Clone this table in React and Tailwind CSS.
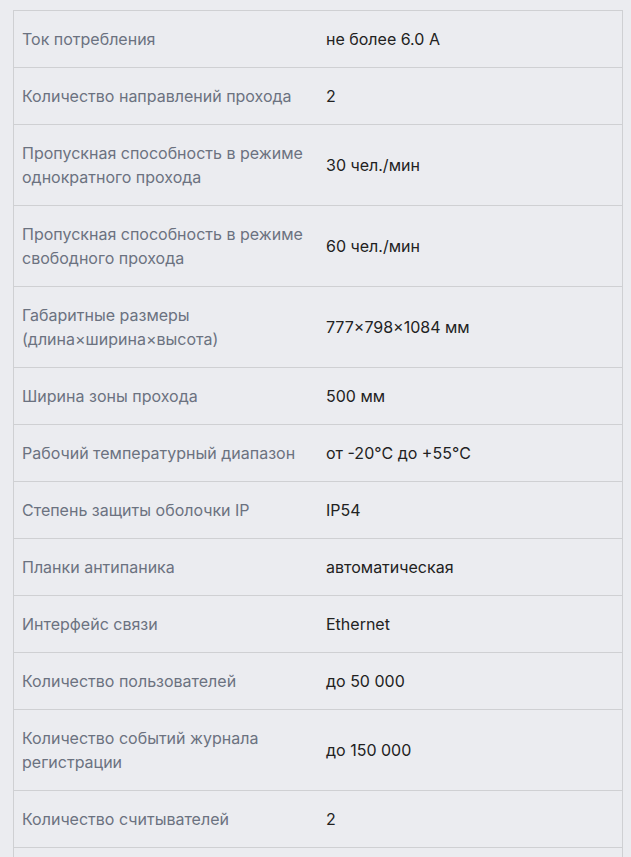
const rows = [
  ["Ток потребления", "не более 6.0 А"],
  ["Количество направлений прохода", "2"],
  ["Пропускная способность в режиме однократного прохода", "30 чел./мин"],
  ["Пропускная способность в режиме свободного прохода", "60 чел./мин"],
  ["Габаритные размеры (длина×ширина×высота)", "777×798×1084 мм"],
  ["Ширина зоны прохода", "500 мм"],
  ["Рабочий температурный диапазон", "от -20°C до +55°C"],
  ["Степень защиты оболочки IP", "IP54"],
  ["Планки антипаника", "автоматическая"],
  ["Интерфейс связи", "Ethernet"],
  ["Количество пользователей", "до 50 000"],
  ["Количество событий журнала регистрации", "до 150 000"],
  ["Количество считывателей", "2"],
  ["\u00a0", "\u00a0"],
];

export default function App() {
  return (
    <div className="min-h-screen bg-[#ebecf0] pt-[10px] pl-[13px]" style={{ fontFamily: "Inter, 'Noto Sans', sans-serif" }}>
      <table className="w-[610px] table-fixed border-collapse border border-[#cfd0d3] text-[16px] leading-6">
        <tbody>
          {rows.map(([k, v], i) => (
            <tr key={i} className="border-b border-[#cfd0d3]">
              <td className="w-1/2 py-4 pl-2 pr-2 align-middle text-[#6b7280]">{k}</td>
              <td className="w-1/2 py-4 pl-2 pr-2 align-middle text-[#222222]">{v}</td>
            </tr>
          ))}
        </tbody>
      </table>
    </div>
  );
}
